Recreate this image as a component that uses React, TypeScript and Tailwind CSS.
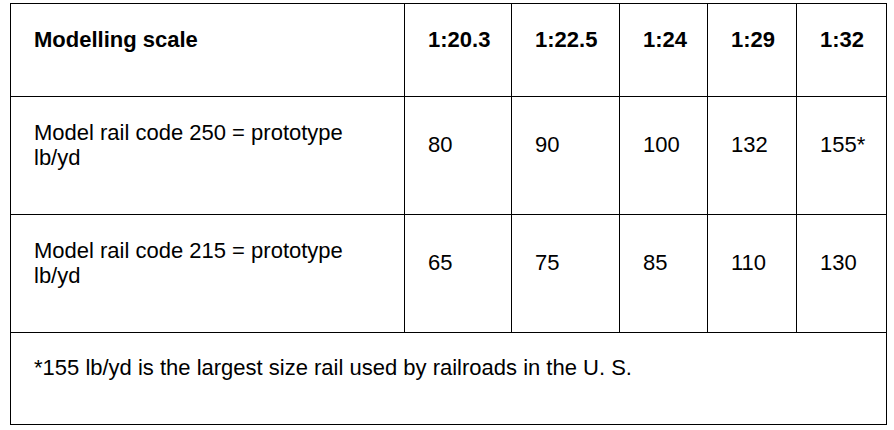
import React from "react";

const cols = [394, 107, 108, 88, 89, 90];

const td =
  "border border-black align-middle pt-[22px] pb-[44px] pl-[23px] pr-[10px] leading-[25px]";

export default function App() {
  const rows: string[][] = [
    ["Model rail code 250 = prototype lb/yd", "80", "90", "100", "132", "155*"],
    ["Model rail code 215 = prototype lb/yd", "65", "75", "85", "110", "130"],
  ];
  const head = ["Modelling scale", "1:20.3", "1:22.5", "1:24", "1:29", "1:32"];
  return (
    <div
      className="bg-white w-[894px] h-[430px] pt-[3px] pl-[10px] text-black text-[22px]"
      style={{ fontFamily: '"Liberation Sans", Arial, sans-serif' }}
    >
      <table className="table-fixed border-collapse w-[876px]">
        <colgroup>
          {cols.map((w, i) => (
            <col key={i} style={{ width: w }} />
          ))}
        </colgroup>
        <tbody>
          <tr className="h-[93px]">
            {head.map((h, i) => (
              <td key={i} className={`${td} font-bold`}>
                {h}
              </td>
            ))}
          </tr>
          {rows.map((r, ri) => (
            <tr key={ri} className="h-[118px]">
              {r.map((c, ci) => (
                <td key={ci} className={ci === 0 ? `${td} pr-[23px]` : td}>
                  {c}
                </td>
              ))}
            </tr>
          ))}
          <tr className="h-[91px]">
            <td colSpan={6} className={td}>
              *155 lb/yd is the largest size rail used by railroads in the U. S.
            </td>
          </tr>
        </tbody>
      </table>
    </div>
  );
}
